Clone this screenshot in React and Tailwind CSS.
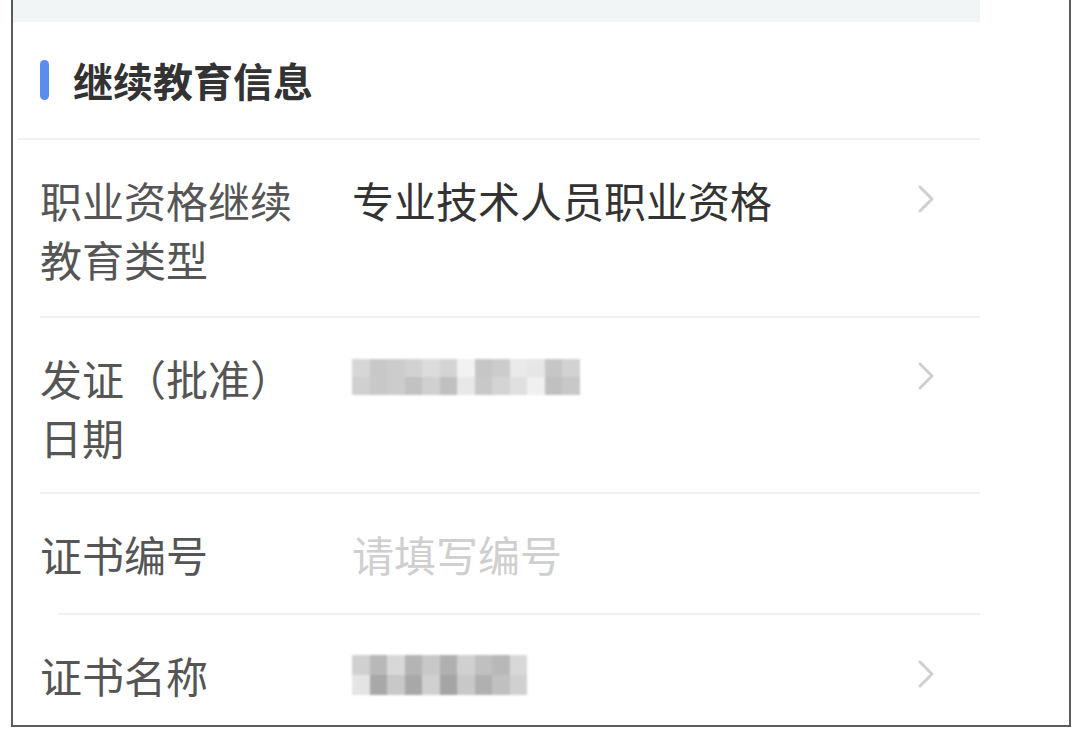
import React from 'react';

const dateBlur = [
  ['bg-[#d6d6d6]', 'bg-[#c8c8c8]', 'bg-[#cccccc]', 'bg-[#d2d2d2]', 'bg-[#dcdcdc]', 'bg-[#d4d4d4]', 'bg-[#f2f2f2]', 'bg-[#c6c6c6]', 'bg-[#cccccc]', 'bg-[#eaeaea]', 'bg-[#e6e6e6]', 'bg-[#c6c6c6]', 'bg-[#d2d2d2]'],
  ['bg-[#d0d0d0]', 'bg-[#c8c8c8]', 'bg-[#cccccc]', 'bg-[#c2c2c2]', 'bg-[#d0d0d0]', 'bg-[#c0c0c0]', 'bg-[#e8e8e8]', 'bg-[#c8c8c8]', 'bg-[#d4d4d4]', 'bg-[#e0e0e0]', 'bg-[#f0f0f0]', 'bg-[#c0c0c0]', 'bg-[#c8c8c8]'],
];

const nameBlur = [
  ['bg-[#d0d0d0]', 'bg-[#b8b8b8]', 'bg-[#d8d8d8]', 'bg-[#b4b4b4]', 'bg-[#c8c8c8]', 'bg-[#b0b0b0]', 'bg-[#d0d0d0]', 'bg-[#c0c0c0]', 'bg-[#b8b8b8]', 'bg-[#d8d8d8]'],
  ['bg-[#e4e4e4]', 'bg-[#a8a8a8]', 'bg-[#c8c8c8]', 'bg-[#a8a8a8]', 'bg-[#d0d0d0]', 'bg-[#a4a4a4]', 'bg-[#c8c8c8]', 'bg-[#b0b0b0]', 'bg-[#c0c0c0]', 'bg-[#d0d0d0]'],
];

const Blur = ({ cells, cellH }) => (
  <div className="flex flex-col blur-[1px]">
    {cells.map((row, i) => (
      <div key={i} className="flex">
        {row.map((c, j) => (
          <div key={j} className={`w-[17.5px] ${cellH} ${c}`} />
        ))}
      </div>
    ))}
  </div>
);

const Chevron = () => (
  <svg width="18" height="30" viewBox="0 0 18 30" fill="none" className="mt-[-2px]">
    <path d="M3 3 L15 15 L3 27" stroke="#cfcfcf" strokeWidth="3" strokeLinecap="round" strokeLinejoin="round" />
  </svg>
);

const Row = ({ label, height, children, arrow = true }) => (
  <div className={`flex items-start pl-[27px] pt-[30px] ${height}`}>
    <div className="w-[312px] shrink-0">
      <div className="max-w-[262px] text-[42px] leading-[59px] text-[#555555]">{label}</div>
    </div>
    <div className="flex-1 h-[59px] flex items-center">{children}</div>
    <div className="w-[18px] mr-[45px] h-[59px] flex items-center">{arrow && <Chevron />}</div>
  </div>
);

const Divider = ({ inset = 'ml-[27px]' }) => <div className={`h-[2px] bg-[#f1f1f1] ${inset}`} />;

export default function App() {
  return (
    <div className="w-[1080px] h-[729px] bg-white font-['Noto_Sans_CJK_SC','Noto_Sans',sans-serif] overflow-hidden">
      <div className="ml-[11px] w-[1060px] h-[727px] border-x-2 border-b-2 border-[#5c5c5c] flex">
        <div className="w-[967px] flex flex-col">
          <div className="h-[22px] bg-[#f1f5f5]" />

          <div className="h-[117px] flex items-center pl-[27px]">
            <div className="w-[9px] h-[40px] rounded-full bg-[#5b8cf0]" />
            <div className="ml-[24px] text-[40px] font-bold text-[#333333] leading-none">继续教育信息</div>
          </div>
          <Divider inset="ml-[4px]" />

          <Row label="职业资格继续教育类型" height="h-[176px]">
            <span className="text-[42px] leading-[59px] text-[#333333]">专业技术人员职业资格</span>
          </Row>
          <Divider />

          <Row label="发证（批准）日期" height="h-[175px]">
            <Blur cells={dateBlur} cellH="h-[18px]" />
          </Row>
          <Divider />

          <Row label="证书编号" height="h-[120px]" arrow={false}>
            <span className="text-[42px] leading-[59px] text-[#cfcfcf]">请填写编号</span>
          </Row>
          <Divider inset="ml-[45px]" />

          <Row label="证书名称" height="h-[110px]">
            <Blur cells={nameBlur} cellH="h-[20px]" />
          </Row>
        </div>
        <div className="flex-1" />
      </div>
    </div>
  );
}
